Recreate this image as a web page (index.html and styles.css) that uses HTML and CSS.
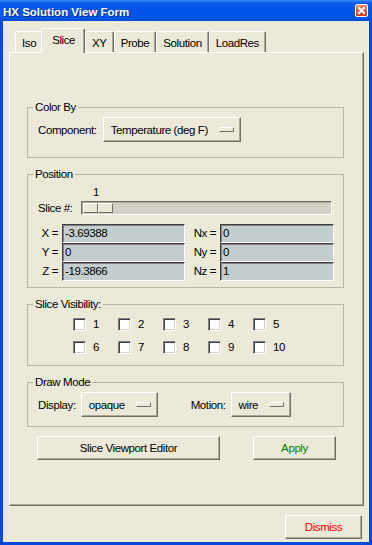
FILE: index.html
```html
<!DOCTYPE html>
<html>
<head>
<meta charset="utf-8">
<title>HX Solution View Form</title>
<link rel="stylesheet" href="styles.css">
</head>
<body>
<div class="window">
  <div class="titlebar">
    <span class="title">HX Solution View Form</span>
    <span class="close"><svg width="11" height="11" viewBox="0 0 11 11"><path d="M3 3L8 8M8 3L3 8" stroke="#fff" stroke-width="2" stroke-linecap="square" fill="none"/></svg></span>
  </div>
  <div class="client">
    <div class="tabs">
      <div class="tab">Iso</div>
      <div class="tab active">Slice</div>
      <div class="tab">XY</div>
      <div class="tab">Probe</div>
      <div class="tab">Solution</div>
      <div class="tab">LoadRes</div>
    </div>
    <div class="panel">
      <div class="group">
        <div class="group-title">Color By</div>
        <div class="row row-menu">
          <span class="lbl">Component:</span>
          <span class="menubtn">Temperature (deg F)<i class="ind"></i></span>
        </div>
      </div>

      <div class="group group-pos">
        <div class="group-title">Position</div>
        <div class="slice-row">
          <span class="lbl slice-lbl">Slice #:</span>
          <div class="scale">
            <div class="scale-value">1</div>
            <div class="trough"><div class="thumb"><span></span><span></span></div></div>
          </div>
        </div>
        <div class="fields">
          <span class="flabel">X =</span><span class="field">-3.69388</span>
          <span class="flabel">Nx =</span><span class="field">0</span>
          <span class="flabel">Y =</span><span class="field">0</span>
          <span class="flabel">Ny =</span><span class="field">0</span>
          <span class="flabel">Z =</span><span class="field">-19.3866</span>
          <span class="flabel">Nz =</span><span class="field">1</span>
        </div>
      </div>

      <div class="group group-vis">
        <div class="group-title">Slice Visibility:</div>
        <div class="checks">
          <label class="check"><i class="box"></i>1</label>
          <label class="check"><i class="box"></i>2</label>
          <label class="check"><i class="box"></i>3</label>
          <label class="check"><i class="box"></i>4</label>
          <label class="check"><i class="box"></i>5</label>
          <label class="check"><i class="box"></i>6</label>
          <label class="check"><i class="box"></i>7</label>
          <label class="check"><i class="box"></i>8</label>
          <label class="check"><i class="box"></i>9</label>
          <label class="check"><i class="box"></i>10</label>
        </div>
      </div>

      <div class="group group-draw">
        <div class="group-title">Draw Mode</div>
        <div class="row row-menu">
          <span class="lbl">Display:</span>
          <span class="menubtn">opaque<i class="ind"></i></span>
          <span class="lbl lbl-motion">Motion:</span>
          <span class="menubtn">wire<i class="ind"></i></span>
        </div>
      </div>

      <div class="buttons">
        <span class="btn btn-editor">Slice Viewport Editor</span>
        <span class="btn btn-apply">Apply</span>
      </div>
    </div>
    <div class="footer">
      <span class="btn btn-dismiss">Dismiss</span>
    </div>
  </div>
</div>
</body>
</html>
```
FILE: styles.css
```css
* { box-sizing: border-box; }

body {
  margin: 0;
  width: 372px;
  height: 545px;
  overflow: hidden;
  background: #ECE9D8;
  font-family: "Liberation Sans", Arial, sans-serif;
  font-size: 11.5px;
  letter-spacing: -0.4px;
  color: #000;
}

.window {
  width: 372px;
  height: 545px;
  display: flex;
  flex-direction: column;
}

.titlebar {
  height: 21px;
  flex: none;
  display: flex;
  align-items: center;
  justify-content: space-between;
  padding: 0 4px 0 3px;
  background: linear-gradient(to bottom, #3D8EF8 0, #0A5DEB 3px, #0054E3 50%, #0058EE 80%, #004CD4 100%);
}

.title {
  color: #fff;
  font-weight: bold;
  font-size: 11.5px;
  letter-spacing: 0;
  padding-top: 3px;
  text-shadow: 1px 1px 0 #0B2A8A;
}

.close {
  width: 13px;
  height: 13px;
  border: 1px solid #fff;
  border-radius: 2px;
  background: linear-gradient(to bottom, #EE8C6C, #DA4F22 60%, #C8401A);
  display: flex;
  align-items: center;
  justify-content: center;
}

.client {
  flex: 1;
  border: 3px solid #0A48DD;
  border-top: 0;
  padding: 7px 5px 0 6px;
  display: flex;
  flex-direction: column;
}

.tabs {
  height: 24px;
  display: flex;
  align-items: flex-end;
  padding-left: 6px;
  position: relative;
  z-index: 1;
}

.tab {
  height: 21px;
  padding: 1px 6px 0 6px;
  display: flex;
  align-items: center;
  background: #ECE9D8;
  border-top: 1px solid #fff;
  border-left: 1px solid #fff;
  border-right: 1px solid #716F64;
  box-shadow: inset -1px 0 #ACA899;
  border-radius: 2px 2px 0 0;
}

.tab.active {
  height: 25px;
  margin: 0 0 -1px -2px;
  padding: 0 9px 2px 10px;
  position: relative;
  z-index: 2;
}

.panel {
  height: 454px;
  flex: none;
  border: 1px solid;
  border-color: #fff #716F64 #716F64 #fff;
  box-shadow: inset -1px -1px #ACA899;
  padding: 54px 19px 0 17px;
}

.group {
  border: 1px solid #B9B6A6;
  padding: 0 9px 0 10px;
}

.group + .group { margin-top: 16px; }

.group-title {
  display: block;
  width: fit-content;
  height: 14px;
  line-height: 14px;
  margin: -8px 0 0 -5px;
  padding: 0 2px;
  background: #ECE9D8;
}

.row {
  display: flex;
  align-items: center;
}

.row-menu {
  margin-top: 3px;
  gap: 6px;
}

.group:first-child { padding-bottom: 15px; }

.lbl-motion { margin-left: 28px; }

.menubtn {
  height: 25px;
  display: inline-flex;
  align-items: center;
  gap: 11px;
  padding: 0 6px 0 7px;
  border: 1px solid;
  border-color: #fff #716F64 #716F64 #fff;
  box-shadow: inset -1px -1px #ACA899;
}

.ind {
  display: block;
  width: 15px;
  height: 5px;
  border: 1px solid;
  border-color: #fff #716F64 #716F64 #fff;
  background: #ECE9D8;
}

/* Position */
.group-pos { padding-bottom: 6px; }

.slice-row {
  display: flex;
  align-items: flex-end;
  gap: 8px;
  margin-top: 4px;
}

.slice-lbl {
  line-height: 14px;
}

.scale {
  flex: 1;
  display: flex;
  flex-direction: column;
  margin-right: 2px;
}

.scale-value {
  width: 31px;
  height: 14px;
  line-height: 14px;
  text-align: center;
  margin-bottom: 2px;
}

.trough {
  height: 14px;
  border: 1px solid;
  border-color: #716F64 #fff #fff #716F64;
  box-shadow: inset 1px 1px #ACA899;
  background: #D4D0C8;
  padding: 1px;
  display: flex;
}

.thumb {
  display: flex;
  height: 10px;
}

.thumb span {
  width: 15px;
  height: 10px;
  border: 1px solid;
  border-color: #fff #716F64 #716F64 #fff;
  background: #ECE9D8;
}

.fields {
  display: grid;
  grid-template-columns: 24px 123px 35px 114px;
  grid-auto-rows: 19px;
  margin-top: 9px;
}

.flabel {
  text-align: right;
  padding-right: 4px;
  line-height: 19px;
}

.field {
  border: 1px solid;
  border-color: #404040 #fff #fff #404040;
  box-shadow: inset 1px 1px #808080;
  background: #C4CECE;
  padding: 0 2px;
  line-height: 17px;
  white-space: nowrap;
  overflow: hidden;
}

/* Visibility */
.group-vis { padding-bottom: 11px; }

.checks {
  display: grid;
  grid-template-columns: repeat(5, 45px);
  grid-auto-rows: 13px;
  row-gap: 10px;
  margin: 7px 0 0 35px;
}

.check {
  display: flex;
  align-items: center;
  gap: 7px;
  line-height: 13px;
}

.box {
  display: block;
  width: 13px;
  height: 13px;
  border: 1px solid;
  border-color: #808080 #fff #fff #808080;
  box-shadow: inset 1px 1px #404040, inset -1px -1px #D4D0C8;
  background: #fff;
}

/* Draw mode */
.group-draw { padding-bottom: 9px; }

.group-draw .row-menu { gap: 5px; }

/* Buttons */
.buttons {
  display: flex;
  gap: 33px;
  margin: 9px 0 0 10px;
}

.btn {
  height: 24px;
  display: flex;
  align-items: center;
  justify-content: center;
  border: 1px solid;
  border-color: #fff #716F64 #716F64 #fff;
  box-shadow: inset -1px -1px #ACA899;
}

.btn-editor { width: 183px; }
.btn-apply { width: 83px; color: #007F00; }

.footer {
  display: flex;
  justify-content: flex-end;
  margin-top: 9px;
  padding-right: 2px;
}

.btn-dismiss {
  width: 77px;
  color: #FF0000;
}
```
